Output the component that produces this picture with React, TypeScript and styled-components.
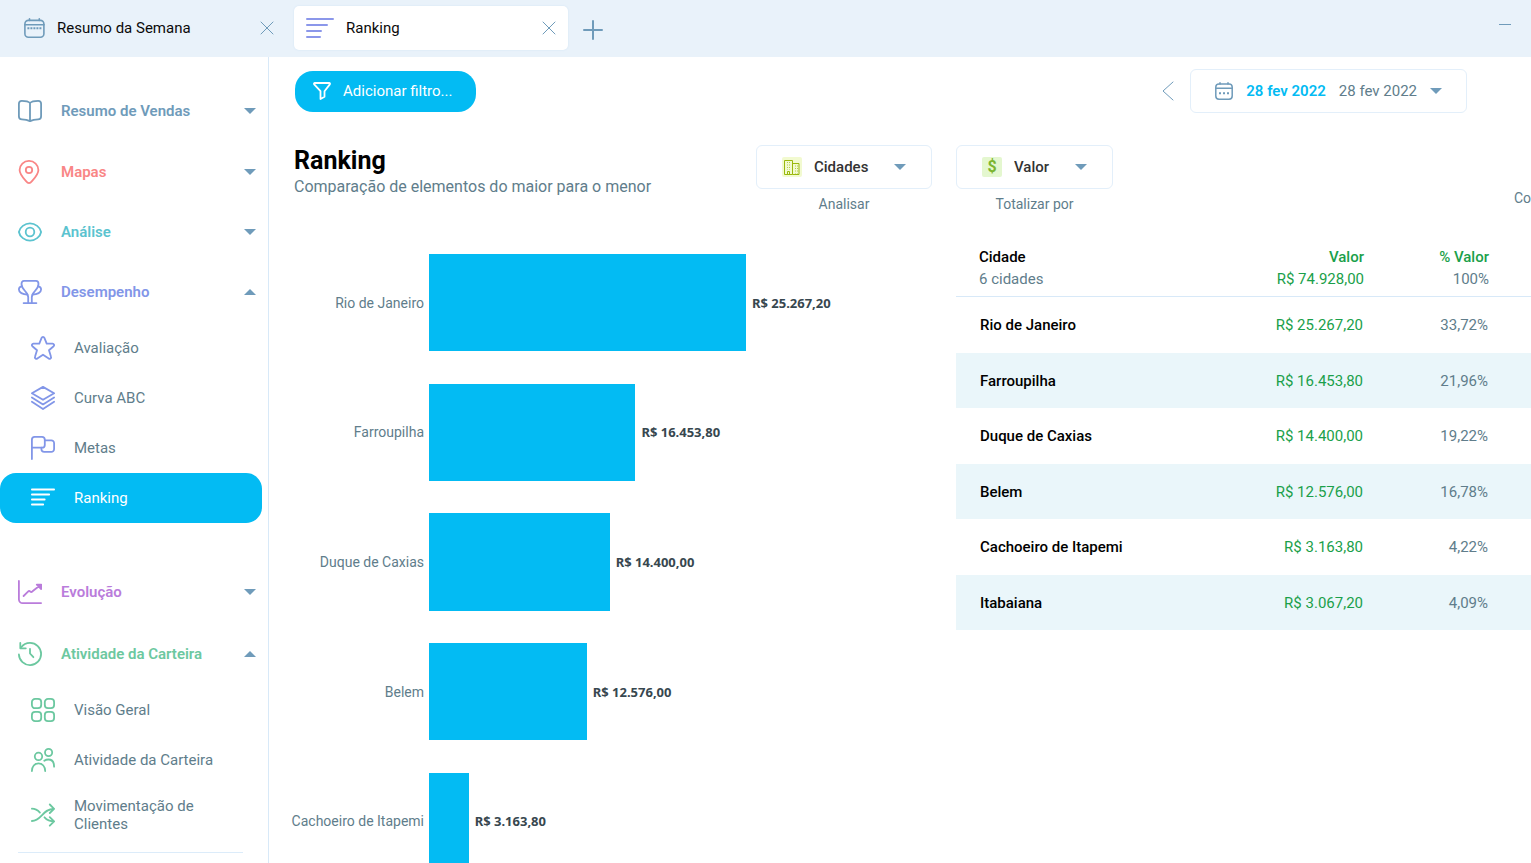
import React from "react";
import styled, { createGlobalStyle } from "styled-components";

const color = {
  cyan: "#03bbf3",
  slate: "#607d8b",
  steel: "#6f9bba",
  ink: "#0b0b0b",
  line: "#e3effa",
  bar: "#e9f2fa",
  green: "#1aa04a",
  indigo: "#8296e8",
  mint: "#6cc8a0",
};

const GlobalStyle = createGlobalStyle`
  *, *::before, *::after { box-sizing: border-box; }
  body {
    margin: 0;
    background: #fff;
    color: ${color.ink};
    font: 400 15px/18px Roboto, "Liberation Sans", sans-serif;
  }
  button, select { font: inherit; color: inherit; }
`;

/* ---------- layout ---------- */

const Shell = styled.div`
  display: flex;
  flex-direction: column;
  height: 100vh;
  overflow: hidden;
`;

const TabBar = styled.header`
  display: flex;
  align-items: center;
  flex: none;
  height: 57px;
  padding: 0 20px 2px 12px;
  background: ${color.bar};
`;

const Tabs = styled.nav`
  display: flex;
  gap: 8px;
  flex: 1;
  align-items: center;
`;

const Tab = styled.div<{ $active?: boolean }>`
  display: flex;
  align-items: center;
  gap: 12px;
  width: 274px;
  height: 44px;
  padding: 0 12px;
  border-radius: 5px;
  background: ${(p) => (p.$active ? "#fff" : "transparent")};
  box-shadow: ${(p) => (p.$active ? "0 0 2px #cfe2f3" : "none")};
`;

const TabLink = styled.a`
  display: flex;
  flex: 1;
  align-items: center;
  gap: 12px;
  color: ${color.ink};
  text-decoration: none;
`;

const IconButton = styled.button`
  display: flex;
  padding: 0;
  border: 0;
  background: none;
  color: ${color.steel};
  cursor: pointer;
`;

const NewTab = styled(IconButton)`
  margin: 4px 0 0 7px;
`;

const Minimize = styled(IconButton)`
  margin-bottom: 6px;
`;

const Body = styled.div`
  display: flex;
  flex: 1;
  min-height: 0;
`;

const Sidebar = styled.aside`
  flex: none;
  width: 269px;
  padding-top: 24px;
  border-right: 1px solid #d8e9f8;
  overflow: auto;
  scrollbar-width: none;
`;

const Group = styled.section<{ $space?: number }>`
  margin-top: ${(p) => p.$space ?? 0}px;
`;

const GroupButton = styled.button<{ $tone: string }>`
  display: flex;
  align-items: center;
  gap: 19px;
  width: 256px;
  height: 60px;
  padding: 0 0 0 18px;
  border: 0;
  background: none;
  color: ${(p) => p.$tone};
  font-weight: 600;
  text-align: left;
  cursor: pointer;
`;

const GroupTitle = styled.span`
  flex: 1;
`;

const SubList = styled.ul`
  margin: 0;
  padding: 1px 0 7px;
  list-style: none;
`;

const SubLink = styled.a<{ $active?: boolean; $tall?: boolean }>`
  display: flex;
  align-items: center;
  gap: 19px;
  width: 262px;
  height: ${(p) => (p.$tall ? 60 : 50)}px;
  padding: 0 24px 0 31px;
  border-radius: 16px;
  background: ${(p) => (p.$active ? color.cyan : "transparent")};
  color: ${(p) => (p.$active ? "#fff" : color.slate)};
  text-decoration: none;
`;

const SubIcon = styled.span<{ $tone: string }>`
  display: flex;
  flex: none;
  color: ${(p) => p.$tone};
`;

const Divider = styled.hr`
  width: 225px;
  height: 1px;
  margin: 0 0 0 18px;
  border: 0;
  background: #dcecfa;
`;

const Main = styled.main`
  flex: 1;
  min-width: 0;
  overflow: auto;
  scrollbar-width: none;
`;

const Toolbar = styled.div`
  display: flex;
  align-items: center;
  justify-content: space-between;
  padding: 12px 64px 0 26px;
`;

const FilterButton = styled.button`
  display: flex;
  align-items: center;
  gap: 12px;
  height: 41px;
  padding: 0 24px 0 18px;
  border: 0;
  border-radius: 18px;
  background: ${color.cyan};
  color: #fff;
  cursor: pointer;
`;

const Period = styled.div`
  display: flex;
  align-items: center;
  gap: 16px;
`;

const PeriodButton = styled.button`
  display: flex;
  align-items: center;
  gap: 13px;
  height: 44px;
  padding: 0 24px;
  border: 1px solid ${color.line};
  border-radius: 6px;
  background: #fff;
  color: ${color.slate};
  cursor: pointer;
`;

const StartDate = styled.span`
  color: ${color.cyan};
  font-weight: 600;
`;

const Report = styled.div`
  display: grid;
  grid-template-columns: minmax(0, 1fr) 575px;
  column-gap: 24px;
  padding: 32px 0 0 25px;
`;

const ReportHead = styled.div`
  display: flex;
  justify-content: space-between;
  height: 93px;
`;

const Title = styled.h1`
  margin: 0;
  font-size: 25px;
  font-weight: 700;
  line-height: 32px;
  color: #000;
`;

const Subtitle = styled.p`
  margin: 0;
  font-size: 16px;
  line-height: 20px;
  color: ${color.slate};
`;

const Field = styled.div`
  display: flex;
  flex-direction: column;
  align-items: center;
  gap: 6px;
`;

const FieldBox = styled.div`
  display: flex;
  align-items: center;
  gap: 12px;
  height: 44px;
  padding: 0 25px;
  border: 1px solid ${color.line};
  border-radius: 6px;
  color: ${color.steel};
`;

const Picker = styled.select`
  appearance: none;
  margin-right: 13px;
  padding: 0;
  border: 0;
  outline: 0;
  background: none;
  color: #333;
  font-weight: 500;
`;

const FieldLabel = styled.label`
  font-size: 14px;
  color: ${color.slate};
`;

const CompareLabel = styled(FieldLabel)`
  align-self: flex-start;
  padding-top: 44px;
  white-space: nowrap;
`;

const Badge = styled.span<{ $tint: string }>`
  display: flex;
  align-items: center;
  justify-content: center;
  width: 20px;
  height: 20px;
  border-radius: 2px;
  background: ${(p) => p.$tint};
  color: #7cb52f;
  font-size: 16px;
  font-weight: 700;
`;

/* ---------- chart ---------- */

const Chart = styled.ol`
  display: flex;
  flex-direction: column;
  height: 648px;
  margin: 0;
  padding: 0;
  list-style: none;
`;

const ChartRow = styled.li`
  display: grid;
  grid-template-columns: 130px minmax(0, 1fr);
  flex: 1;
  align-items: center;
  column-gap: 5px;
`;

const ChartLabel = styled.span`
  justify-self: end;
  font-size: 14px;
  white-space: nowrap;
  color: ${color.slate};
`;

const Plot = styled.div`
  display: flex;
  align-items: center;
  gap: 6px;
  height: 75%;
`;

const Bar = styled.div`
  height: 100%;
  background: ${color.cyan};
`;

const BarValue = styled.span`
  font: 700 13px/18px "Noto Sans", sans-serif;
  white-space: nowrap;
  color: #37474f;
`;

/* ---------- table ---------- */

const Table = styled.table`
  align-self: start;
  width: 100%;
  margin-top: 8px;
  border-collapse: separate;
  border-spacing: 0;
  table-layout: fixed;
`;

const HeadCell = styled.th<{ $end?: boolean; $last?: boolean }>`
  height: 51px;
  padding: 0 ${(p) => (p.$last ? 42 : 0)}px 6px ${(p) => (p.$end ? 0 : 23)}px;
  border-bottom: 1px solid #d8e9f8;
  text-align: ${(p) => (p.$end ? "right" : "left")};
  line-height: 22px;
  font-weight: 500;
  color: ${(p) => (p.$end ? color.green : "#000")};
`;

const Total = styled.span<{ $tone: string }>`
  display: block;
  font-weight: 400;
  color: ${(p) => p.$tone};
`;

const Row = styled.tr`
  height: 56px;
  &:nth-child(even) {
    height: 55px;
    background: #eaf6fa;
  }
`;

const Cell = styled.td`
  padding: 0 43px 0 0;
  text-align: right;
  color: ${color.slate};
`;

const AmountCell = styled(Cell)`
  padding-right: 1px;
  color: ${color.green};
`;

const NameCell = styled.th`
  padding: 0 0 0 24px;
  text-align: left;
  font-weight: 500;
  color: #000;
`;

/* ---------- icons ---------- */

type IconProps = { children: React.ReactNode; w?: number; h?: number; sw?: number };

const Icon = ({ children, w = 24, h = 24, sw = 1.8 }: IconProps) => (
  <svg
    width={w}
    height={h}
    viewBox={`0 0 ${w} ${h}`}
    fill="none"
    stroke="currentColor"
    strokeWidth={sw}
    strokeLinecap="round"
    strokeLinejoin="round"
    aria-hidden="true"
  >
    {children}
  </svg>
);

const Caret = ({ up }: { up?: boolean }) => (
  <svg width="12" height="6" viewBox="0 0 12 6" fill={color.steel} aria-hidden="true">
    <path d={up ? "M0 6h12L6 0z" : "M0 0h12L6 6z"} />
  </svg>
);

const Close = () => (
  <Icon w={14} h={14} sw={1}>
    <path d="M1 1l12 12M13 1L1 13" />
  </Icon>
);

const BookIcon = () => (
  <Icon>
    <path d="M12 4C10.2 2 7 1.800 3.800 1.800 1.900 1.800.9 2.900.9 4.800v12.400c0 2 1 3.200 3 3.200 3 0 5.600.400 8.100 1.700 2.500-1.300 5.100-1.700 8.100-1.700 2 0 3-1.200 3-3.200V4.800c0-1.900-1-3-2.900-3C17 1.800 13.800 2 12 4zM12 4v18" />
  </Icon>
);

const PinIcon = () => (
  <Icon>
    <path d="M11 23.100c-1.300 0-2.200-1-3.200-2.200C4.500 17.300 1.600 13.500 1.600 10a9.400 9.100 0 0 1 18.800 0c0 3.500-2.900 7.300-6.200 10.900-1 1.200-1.900 2.200-3.200 2.200z" />
    <circle cx="11" cy="10" r="3.200" />
  </Icon>
);

const EyeIcon = () => (
  <Icon>
    <path d="M.9 12C1.600 7.300 7 3.300 12 3.300S22.400 7.300 23.100 12C22.400 16.700 17 20.700 12 20.700S1.600 16.700.9 12z" />
    <circle cx="12" cy="12" r="4.300" />
  </Icon>
);

const TrophyIcon = () => (
  <Icon>
    <path d="M10.200 22.800V17c0-5.200-6.700-7-6.700-13C3.500 2 4.300.9 6 .9h12c1.700 0 2.500 1.100 2.500 3.100 0 6-6.700 7.800-6.700 13v5.800M5.600 23.100h12.800" />
    <path d="M3.700 6.300C1.700 6.600.9 8 .9 9.500c0 3 3.700 5 8.500 5M20.300 6.300c2 .3 2.800 1.700 2.800 3.200 0 3-3.700 5-8.500 5" />
  </Icon>
);

const StarIcon = () => (
  <Icon>
    <path d="M10.600 1.900a1.500 1.500 0 0 1 2.800 0l2.300 5.700h5.900a1.500 1.500 0 0 1 1 2.600L18 14.200l2 6.600a1.500 1.500 0 0 1-2.300 1.700L12 18.700l-5.700 3.800A1.500 1.500 0 0 1 4 20.800l2-6.600-4.600-4a1.500 1.500 0 0 1 1-2.600h5.900z" />
  </Icon>
);

const LayersIcon = () => (
  <Icon>
    <path d="M12 .9L23.100 7.300 12 13.800.9 7.300zM.9 11.400L12 18.400l11.100-7M.9 15.800L12 23.100l11.100-7.300" />
  </Icon>
);

const FlagIcon = () => (
  <Icon>
    <path d="M.9 23.100V3.600A2.800 2.800 0 0 1 3.600.9H11a2.800 2.800 0 0 1 2.800 2.700v5.300a2.800 2.800 0 0 1-2.800 2.800H.9" />
    <path d="M13.800 4.400h6.500a2.800 2.800 0 0 1 2.800 2.800v5.900a2.800 2.800 0 0 1-2.800 2.800h-7.100a2.800 2.800 0 0 1-2.800-2.800v-1.400" />
  </Icon>
);

const RankingIcon = () => (
  <Icon>
    <path d="M.9 3.500h22.200M.9 8.500h17.300M.9 13.500h12.800M.9 18.500h11.300" />
  </Icon>
);

const RankingTabIcon = () => (
  <Icon w={28} h={20} sw={2}>
    <path d="M1 1h26M1 7h20M1 13h14M1 19h13" />
  </Icon>
);

const TrendIcon = () => (
  <Icon>
    <path d="M.9.900v18.500a3.800 3.800 0 0 0 3.800 3.700h18.400" />
    <path d="M5.600 16l4.400-4.400c.7-.7 1.500-.7 2.200-.1.700.6 1.600.5 2.300-.2L22.500 5M18.800 4.600h4.400V9z" />
  </Icon>
);

const HistoryIcon = () => (
  <Icon>
    <path d="M.9 12.500A11.100 11.100 0 1 0 12 .9C8.400.9 5.200 2.500 3 5.500" />
    <path d="M2.300 1v5.300h5.500M12 6.800v4.700l3.400 3.700" />
  </Icon>
);

const GridIcon = () => (
  <Icon>
    <rect x=".9" y=".9" width="9.300" height="9.300" rx="3.200" />
    <rect x="13.800" y=".9" width="9.300" height="9.300" rx="3.200" />
    <rect x=".9" y="13.800" width="9.300" height="9.300" rx="3.200" />
    <rect x="13.800" y="13.800" width="9.300" height="9.300" rx="3.200" />
  </Icon>
);

const UsersIcon = () => (
  <Icon>
    <circle cx="7.500" cy="8.400" r="3.700" />
    <circle cx="17.600" cy="4.500" r="3.600" />
    <path d="M.9 23.100c0-4.600 2.700-7.700 6.600-7.700s6.700 3.100 6.700 7.700M13.300 12.800c1.200-.9 2.600-1.300 4.100-1.300 3.600 0 5.700 2.800 5.700 7.200" />
  </Icon>
);

const ShuffleIcon = () => (
  <Icon>
    <path d="M.9 18C10.500 18 11.500 5.800 23 5.800M18.800 1.500L23.100 5.800 18.800 10M.9 5.700c3.600 0 6 1.700 8 3.900M13.500 14.300c2.300 2.500 5 4.100 9.500 4.100M18.800 14.200l4.300 4.200-4.300 4.300" />
  </Icon>
);

const WeekIcon = () => (
  <Icon w={21} h={20} sw={1.600}>
    <rect x=".9" y="2.400" width="19" height="16.800" rx="3.500" />
    <path d="M1 6.800h19M5.500.8v1.600M15.300.8v1.600" />
    <path d="M3.400 10.300h14" strokeWidth="2" strokeDasharray="2 1" strokeLinecap="butt" />
  </Icon>
);

const CalendarIcon = () => (
  <Icon w={18} h={18} sw={1.500}>
    <rect x=".8" y="1.900" width="16.400" height="15.300" rx="3.200" />
    <path d="M.8 6.300h16.400M5 .8v1.100M13 .8v1.100" />
    <path d="M4 11.200h10" strokeWidth="2" strokeDasharray="2" strokeLinecap="butt" />
  </Icon>
);

const FunnelIcon = () => (
  <Icon w={18} h={18} sw={1.800}>
    <path d="M1.800 1h14.400c.8 0 1.100.8.600 1.400L11.500 9.200v5.500L7.500 17V9.200L1.200 2.400C.7 1.800 1 1 1.800 1z" />
  </Icon>
);

const BuildingIcon = () => (
  <svg width="16" height="16" viewBox="0 0 16 16" fill="none" stroke="#9ab80c" aria-hidden="true">
    <path d="M.5 15.500V1.500h8v14zM8.500 4.500h6.500v11H8.500M3.500 15.500v-3h2v3" />
    <path d="M3.500 3v8M5.500 3v8M11.500 6.500v8M13.500 6.500v8" strokeDasharray="1 1.500" strokeOpacity=".7" />
  </svg>
);

/* ---------- data ---------- */

type Item = { label: string; icon: React.ReactNode; active?: boolean; tall?: boolean };
type GroupData = { label: string; icon: React.ReactNode; tone: string; space?: number; items?: Item[] };

const PERFORMANCE: Item[] = [
  { label: "Avaliação", icon: <StarIcon /> },
  { label: "Curva ABC", icon: <LayersIcon /> },
  { label: "Metas", icon: <FlagIcon /> },
  { label: "Ranking", icon: <RankingIcon />, active: true },
];

const PORTFOLIO: Item[] = [
  { label: "Visão Geral", icon: <GridIcon /> },
  { label: "Atividade da Carteira", icon: <UsersIcon /> },
  { label: "Movimentação de Clientes", icon: <ShuffleIcon />, tall: true },
];

const GROUPS: GroupData[] = [
  { label: "Resumo de Vendas", icon: <BookIcon />, tone: "#6f9bba" },
  { label: "Mapas", icon: <PinIcon />, tone: "#f98686", space: 1 },
  { label: "Análise", icon: <EyeIcon />, tone: "#5bc3cf" },
  { label: "Desempenho", icon: <TrophyIcon />, tone: color.indigo, items: PERFORMANCE },
  { label: "Evolução", icon: <TrendIcon />, tone: "#ba7cdb", space: 32 },
  { label: "Atividade da Carteira", icon: <HistoryIcon />, tone: color.mint, space: 2, items: PORTFOLIO },
];

const AXIS_MAX = 40100;
const CHART_SIZE = 5;

const CITIES = [
  { name: "Rio de Janeiro", value: 25267.2, amount: "R$ 25.267,20", share: "33,72%" },
  { name: "Farroupilha", value: 16453.8, amount: "R$ 16.453,80", share: "21,96%" },
  { name: "Duque de Caxias", value: 14400, amount: "R$ 14.400,00", share: "19,22%" },
  { name: "Belem", value: 12576, amount: "R$ 12.576,00", share: "16,78%" },
  { name: "Cachoeiro de Itapemi", value: 3163.8, amount: "R$ 3.163,80", share: "4,22%" },
  { name: "Itabaiana", value: 3067.2, amount: "R$ 3.067,20", share: "4,09%" },
];

/* ---------- page ---------- */

export default function App() {
  return (
    <Shell>
      <GlobalStyle />
      <TabBar>
        <Tabs aria-label="Abas">
          <Tab>
            <TabLink href="#resumo">
              <SubIcon $tone={color.steel}><WeekIcon /></SubIcon>
              Resumo da Semana
            </TabLink>
            <IconButton aria-label="Fechar Resumo da Semana"><Close /></IconButton>
          </Tab>
          <Tab $active>
            <TabLink href="#ranking" aria-current="page">
              <SubIcon $tone="#8b97ea"><RankingTabIcon /></SubIcon>
              Ranking
            </TabLink>
            <IconButton aria-label="Fechar Ranking"><Close /></IconButton>
          </Tab>
          <NewTab aria-label="Nova aba">
            <Icon w={20} h={20} sw={2}><path d="M10 1v18M1 10h18" /></Icon>
          </NewTab>
        </Tabs>
        <Minimize aria-label="Minimizar">
          <Icon w={12} h={1} sw={1}><path d="M0 .5h12" /></Icon>
        </Minimize>
      </TabBar>

      <Body>
        <Sidebar>
          {GROUPS.map((group) => (
            <Group key={group.label} $space={group.space}>
              <GroupButton $tone={group.tone} aria-expanded={!!group.items}>
                {group.icon}
                <GroupTitle>{group.label}</GroupTitle>
                <Caret up={!!group.items} />
              </GroupButton>
              {group.items && (
                <SubList>
                  {group.items.map((item) => (
                    <li key={item.label}>
                      <SubLink href="#" $active={item.active} $tall={item.tall}>
                        <SubIcon $tone={item.active ? "#fff" : group.tone}>{item.icon}</SubIcon>
                        {item.label}
                      </SubLink>
                    </li>
                  ))}
                </SubList>
              )}
            </Group>
          ))}
          <Divider />
        </Sidebar>

        <Main>
          <Toolbar>
            <FilterButton>
              <FunnelIcon />
              Adicionar filtro...
            </FilterButton>
            <Period>
              <IconButton aria-label="Período anterior">
                <Icon w={12} h={20} sw={1}><path d="M11 1L1 10l10 9" /></Icon>
              </IconButton>
              <PeriodButton>
                <SubIcon $tone={color.steel}><CalendarIcon /></SubIcon>
                <StartDate>28 fev 2022</StartDate>
                <span>28 fev 2022</span>
                <Caret />
              </PeriodButton>
            </Period>
          </Toolbar>

          <Report>
            <ReportHead>
              <div>
                <Title>Ranking</Title>
                <Subtitle>Comparação de elementos do maior para o menor</Subtitle>
              </div>
              <Field>
                <FieldBox>
                  <Badge $tint="#f2fad0"><BuildingIcon /></Badge>
                  <Picker id="analisar"><option>Cidades</option></Picker>
                  <Caret />
                </FieldBox>
                <FieldLabel htmlFor="analisar">Analisar</FieldLabel>
              </Field>
            </ReportHead>
            <ReportHead>
              <Field>
                <FieldBox>
                  <Badge $tint="#e4f7cf" aria-hidden="true">$</Badge>
                  <Picker id="totalizar"><option>Valor</option></Picker>
                  <Caret />
                </FieldBox>
                <FieldLabel htmlFor="totalizar">Totalizar por</FieldLabel>
              </Field>
              <CompareLabel as="span">Co</CompareLabel>
            </ReportHead>

            <Chart>
              {CITIES.slice(0, CHART_SIZE).map((city) => (
                <ChartRow key={city.name}>
                  <ChartLabel>{city.name}</ChartLabel>
                  <Plot>
                    <Bar style={{ width: `${(city.value / AXIS_MAX) * 100}%` }} />
                    <BarValue>{city.amount}</BarValue>
                  </Plot>
                </ChartRow>
              ))}
            </Chart>

            <Table>
              <colgroup>
                <col />
                <col width="160" />
                <col width="167" />
              </colgroup>
              <thead>
                <tr>
                  <HeadCell scope="col">
                    Cidade
                    <Total $tone={color.slate}>6 cidades</Total>
                  </HeadCell>
                  <HeadCell scope="col" $end>
                    Valor
                    <Total $tone={color.green}>R$ 74.928,00</Total>
                  </HeadCell>
                  <HeadCell scope="col" $end $last>
                    % Valor
                    <Total $tone={color.slate}>100%</Total>
                  </HeadCell>
                </tr>
              </thead>
              <tbody>
                {CITIES.map((city) => (
                  <Row key={city.name}>
                    <NameCell scope="row">{city.name}</NameCell>
                    <AmountCell>{city.amount}</AmountCell>
                    <Cell>{city.share}</Cell>
                  </Row>
                ))}
              </tbody>
            </Table>
          </Report>
        </Main>
      </Body>
    </Shell>
  );
}
